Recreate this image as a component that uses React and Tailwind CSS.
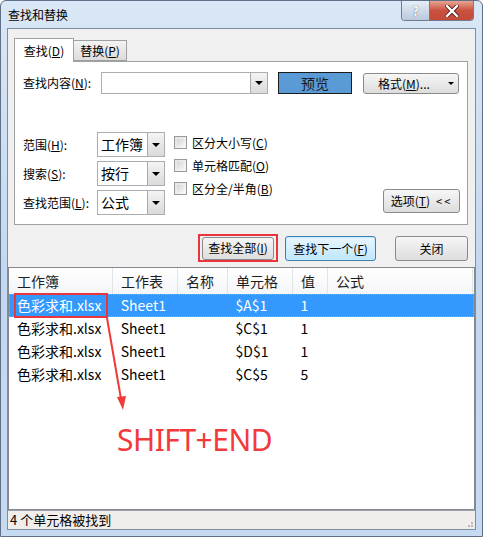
import React from 'react'

const ui = { fontFamily: '"Noto Sans CJK SC", "Noto Sans", sans-serif' }

// 콤보 박스 오른쪽의 작은 삼각형
function Tri() {
  return <span className="h-0 w-0 border-l-[4px] border-r-[4px] border-t-[4px] border-l-transparent border-r-transparent border-t-black" />
}

function Combo({ value, className }) {
  return (
    <div className={'flex border border-[#abadb3] bg-white ' + className}>
      <div className="flex flex-1 items-center pl-[3px] text-[14px] text-black">{value}</div>
      <div className="flex w-[17px] items-center justify-center border-l border-[#a9a9a9] bg-gradient-to-b from-[#f4f4f4] to-[#dadada]">
        <Tri />
      </div>
    </div>
  )
}

function Btn({ children, className }) {
  return (
    <div className={'flex items-center justify-center rounded-[3px] border text-[12px] text-black ' + className}>
      {children}
    </div>
  )
}

function Check({ label }) {
  return (
    <div className="flex h-[23px] items-center gap-[5px]">
      <span className="h-[13px] w-[13px] border border-[#9a9a9a] bg-gradient-to-br from-[#e2e2e2] to-[#f9f9f9] p-[2px]">
        <span className="block h-full w-full bg-gradient-to-br from-[#d6d6d6] to-[#f4f4f4]" />
      </span>
      <span className="text-[12px]">{label}</span>
    </div>
  )
}

const cols = [
  { name: '工作簿', w: 'w-[104px]' },
  { name: '工作表', w: 'w-[65px]' },
  { name: '名称', w: 'w-[50px]' },
  { name: '单元格', w: 'w-[65px]' },
  { name: '值', w: 'w-[35px]' },
  { name: '公式', w: 'w-[145px]' }
]

const rows = [
  ['色彩求和.xlsx', 'Sheet1', '', '$A$1', '1', ''],
  ['色彩求和.xlsx', 'Sheet1', '', '$C$1', '1', ''],
  ['色彩求和.xlsx', 'Sheet1', '', '$D$1', '1', ''],
  ['色彩求和.xlsx', 'Sheet1', '', '$C$5', '5', '']
]

export default function App() {
  return (
    <div className="relative flex h-[537px] w-[483px] flex-col rounded-t-[6px] border border-[#5f7087] bg-gradient-to-b from-[#d9e7f6] via-[#c3d8ef] to-[#c6dbf2] text-black" style={ui}>
      {/* 제목 표시줄 */}
      <div className="flex h-[27px] items-start">
        <div className="pl-[7px] pt-[5px] text-[12px] leading-[18px]">查找和替换</div>
        <div className="ml-auto mr-[8px] flex h-[20px] overflow-hidden rounded-b-[4px] border border-t-0 border-[#6d7c90]">
          <div className="flex w-[28px] items-center justify-center border-r border-[#6d7c90] bg-gradient-to-b from-[#e6eef8] to-[#b9c9dc] text-[13px] font-bold text-white [text-shadow:0_0_1px_#333]">?</div>
          <div className="flex w-[43px] items-center justify-center bg-gradient-to-b from-[#e8a493] via-[#c9513f] to-[#c44a3a]">
            <svg width="14" height="12" viewBox="0 0 14 12">
              <path d="M2 1 L12 11 M12 1 L2 11" stroke="#4a1a14" strokeWidth="4" strokeLinecap="square" />
              <path d="M2 1 L12 11 M12 1 L2 11" stroke="#ffffff" strokeWidth="2.4" strokeLinecap="square" />
            </svg>
          </div>
        </div>
      </div>

      {/* 클라이언트 영역 */}
      <div className="mx-[6px] mb-[6px] flex flex-1 flex-col border border-[#7d8da2] bg-[#f0f0f0]">
        {/* 탭 */}
        <div className="relative z-10 -mb-px ml-[6px] mt-[9px] flex h-[24px] items-end">
          <div className="flex h-[24px] w-[60px] items-center justify-center border border-b-0 border-[#a0a0a0] bg-white text-[12px]">
            查找(<u>D</u>)
          </div>
          <div className="mb-px flex h-[21px] w-[53px] items-center justify-center border border-l-0 border-[#a0a0a0] bg-gradient-to-b from-[#f3f3f3] to-[#dcdcdc] text-[12px]">
            替换(<u>P</u>)
          </div>
        </div>

        <div className="ml-[6px] mr-[7px] flex h-[164px] flex-col border border-[#a0a0a0] bg-white pl-[8px] pr-[7px] pt-[10px]">
          <div className="flex items-start">
            <div className="flex h-[22px] w-[78px] items-center text-[12px]">查找内容(<u>N</u>):</div>
            <Combo value="" className="h-[22px] w-[167px]" />
            <div className="ml-[10px] flex h-[22px] w-[74px] items-center justify-center border border-[#1c1c1c] bg-[#5b9bd5] text-[14px] text-[#1a1a1a]">预览</div>
            <Btn className="ml-[11px] mt-px h-[21px] w-[96px] border-[#8a8a8a] bg-gradient-to-b from-[#f6f6f6] to-[#dddddd] pl-[14px]">
              <span>格式(<u>M</u>)...</span>
              <span className="ml-auto mr-[4px] flex"><span className="h-0 w-0 border-l-[3px] border-r-[3px] border-t-[3px] border-l-transparent border-r-transparent border-t-black" /></span>
            </Btn>
          </div>

          <div className="mt-[38px] flex">
            <div className="flex flex-col gap-[4px]">
              <div className="flex items-center">
                <div className="w-[74px] text-[12px]">范围(<u>H</u>):</div>
                <Combo value="工作簿" className="h-[25px] w-[68px]" />
              </div>
              <div className="flex items-center">
                <div className="w-[74px] text-[12px]">搜索(<u>S</u>):</div>
                <Combo value="按行" className="h-[25px] w-[68px]" />
              </div>
              <div className="flex items-center">
                <div className="w-[74px] text-[12px]">查找范围(<u>L</u>):</div>
                <Combo value="公式" className="h-[25px] w-[68px]" />
              </div>
            </div>
            <div className="ml-[9px] -mt-px flex flex-col">
              <Check label={<>区分大小写(<u>C</u>)</>} />
              <Check label={<>单元格匹配(<u>O</u>)</>} />
              <Check label={<>区分全/半角(<u>B</u>)</>} />
            </div>
            <div className="ml-auto flex items-end pb-[2px]">
              <Btn className="h-[24px] w-[77px] border-[#8a8a8a] bg-gradient-to-b from-[#f6f6f6] to-[#dddddd]">
                选项(<u>T</u>)<span className="ml-[6px] text-[11px] tracking-[2px]">&lt;&lt;</span>
              </Btn>
            </div>
          </div>
        </div>

        {/* 버튼 줄 */}
        <div className="mr-[7px] mt-[9px] flex h-[28px] items-start justify-end">
          <div className="flex h-[28px] w-[80px] items-center justify-center border-2 border-[#e8363b]">
            <Btn className="h-[23px] w-[72px] border-[#8a8a8a] bg-gradient-to-b from-[#f6f6f6] to-[#dddddd]">查找全部(<u>I</u>)</Btn>
          </div>
          <Btn className="ml-[7px] mt-[2px] h-[25px] w-[91px] border-[#3c7fb1] bg-gradient-to-b from-[#eaf6fd] to-[#bee6fd] shadow-[inset_0_0_0_1px_#c8ebff]">查找下一个(<u>F</u>)</Btn>
          <Btn className="ml-[19px] mt-[2px] h-[25px] w-[73px] border-[#8a8a8a] bg-gradient-to-b from-[#f6f6f6] to-[#dddddd]">关闭</Btn>
        </div>

        {/* 결과 목록 */}
        <div className="mt-[5px] flex flex-1 flex-col border border-[#828790] bg-white">
          <div className="flex h-[26px] bg-gradient-to-b from-white to-[#f4f5f7]">
            {cols.map((c) => (
              <div key={c.name} className={'flex items-center border-r border-[#e1e3e6] pl-[8px] text-[14px] text-[#1e1e1e] ' + c.w}>
                {c.name}
              </div>
            ))}
          </div>
          {rows.map((r, i) => (
            <div
              key={i}
              className={
                'flex h-[23px] ' +
                (i === 0 ? 'border border-dotted border-[#c9a074] bg-[#3399ff] text-white' : 'border border-transparent text-black')
              }
            >
              {r.map((v, j) => (
                <div key={j} className={'flex items-center pl-[7px] text-[14px] ' + cols[j].w}>
                  {v}
                </div>
              ))}
            </div>
          ))}
        </div>

        {/* 상태 표시줄 */}
        <div className="flex h-[19px] items-center border-t border-[#9ba2ab] bg-[#f0edeb] pl-[2px] text-[13px]">
          <span>4 个单元格被找到</span>
          <span className="ml-auto mr-[2px] mt-[8px] flex flex-col items-end gap-[1px]">
            <span className="flex gap-[1px]"><span className="h-[2px] w-[2px] bg-[#b8b8b8]" /></span>
            <span className="flex gap-[1px]"><span className="h-[2px] w-[2px] bg-[#b8b8b8]" /><span className="h-[2px] w-[2px] bg-[#b8b8b8]" /></span>
          </span>
        </div>
      </div>

      {/* 주석: 빨간 상자, 화살표, 텍스트 */}
      <div className="pointer-events-none absolute left-[13px] top-[292px] h-[25px] w-[94px] border-2 border-[#e8363b]" />
      <svg className="pointer-events-none absolute left-0 top-0" width="483" height="537" viewBox="0 0 483 537">
        <line x1="106" y1="317" x2="120" y2="398" stroke="#f03a3a" strokeWidth="2" />
        <polygon points="122,409 116,396 125,395" fill="#f03a3a" />
      </svg>
      <div className="pointer-events-none absolute left-[116px] top-[424px] text-[30px] leading-[30px] tracking-[-0.5px] text-[#f23a3a]" style={{ fontFamily: '"Noto Sans", sans-serif' }}>
        SHIFT+END
      </div>
    </div>
  )
}
